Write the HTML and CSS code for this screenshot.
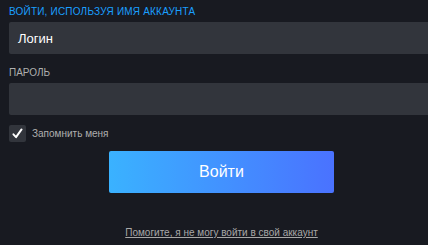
FILE: index.html
```html
<!DOCTYPE html>
<html lang="ru">
<head>
<meta charset="utf-8">
<link rel="stylesheet" href="styles.css">
</head>
<body>
<form class="login">
  <div class="field">
    <div class="label label-accent">Войти, используя имя аккаунта</div>
    <div class="input"><span class="input-text">Логин</span></div>
  </div>
  <div class="field field-password">
    <div class="label">Пароль</div>
    <div class="input"></div>
  </div>
  <label class="remember">
    <span class="checkbox">
      <svg viewBox="0 0 16 16" width="13" height="13"><path d="M3 9 L6.2 12.5 L13 3" fill="none" stroke="#fff" stroke-width="2.4" stroke-linecap="round" stroke-linejoin="round"/></svg>
    </span>
    <span class="remember-text">Запомнить меня</span>
  </label>
  <div class="submit-row">
    <div class="submit">Войти</div>
  </div>
  <div class="help-row">
    <a class="help" href="#">Помогите, я не могу войти в свой аккаунт</a>
  </div>
</form>
</body>
</html>
```
FILE: styles.css
```css
html, body {
  margin: 0;
  padding: 0;
  background: #181a21;
  overflow: hidden;
}
body {
  width: 428px;
  height: 245px;
  font-family: "Liberation Sans", Arial, sans-serif;
}
.login {
  width: 425px;
  margin-left: 9px;
  padding-top: 6px;
  display: flex;
  flex-direction: column;
}
.field {
  display: flex;
  flex-direction: column;
  gap: 5px;
}
.field-password {
  margin-top: 13px;
}
.label {
  font-size: 10px;
  line-height: 11px;
  text-transform: uppercase;
  color: #afafaf;
}
.label-accent {
  color: #1a9fff;
  letter-spacing: 0.2px;
}
.input {
  height: 32px;
  background: #32353c;
  border-radius: 2px;
  display: flex;
  align-items: center;
  padding-left: 9px;
}
.input-text {
  color: #ffffff;
  font-size: 13px;
}
.remember {
  margin-top: 10px;
  display: flex;
  align-items: center;
  gap: 6px;
}
.checkbox {
  width: 17px;
  height: 17px;
  background: #32353c;
  border-radius: 2px;
  display: flex;
  align-items: center;
  justify-content: center;
}
.remember-text {
  font-size: 10px;
  color: #afafaf;
}
.submit-row {
  margin-top: 9px;
  display: flex;
  justify-content: center;
}
.submit {
  width: 225px;
  height: 42px;
  border-radius: 2px;
  background: linear-gradient(90deg, #3ab2ff 0%, #4a72ff 100%);
  color: #ffffff;
  font-size: 16px;
  display: flex;
  align-items: center;
  justify-content: center;
}
.help-row {
  margin-top: 34px;
  display: flex;
  justify-content: center;
}
.help {
  font-size: 10px;
  color: #a8a8a8;
  text-decoration: underline;
}
```
